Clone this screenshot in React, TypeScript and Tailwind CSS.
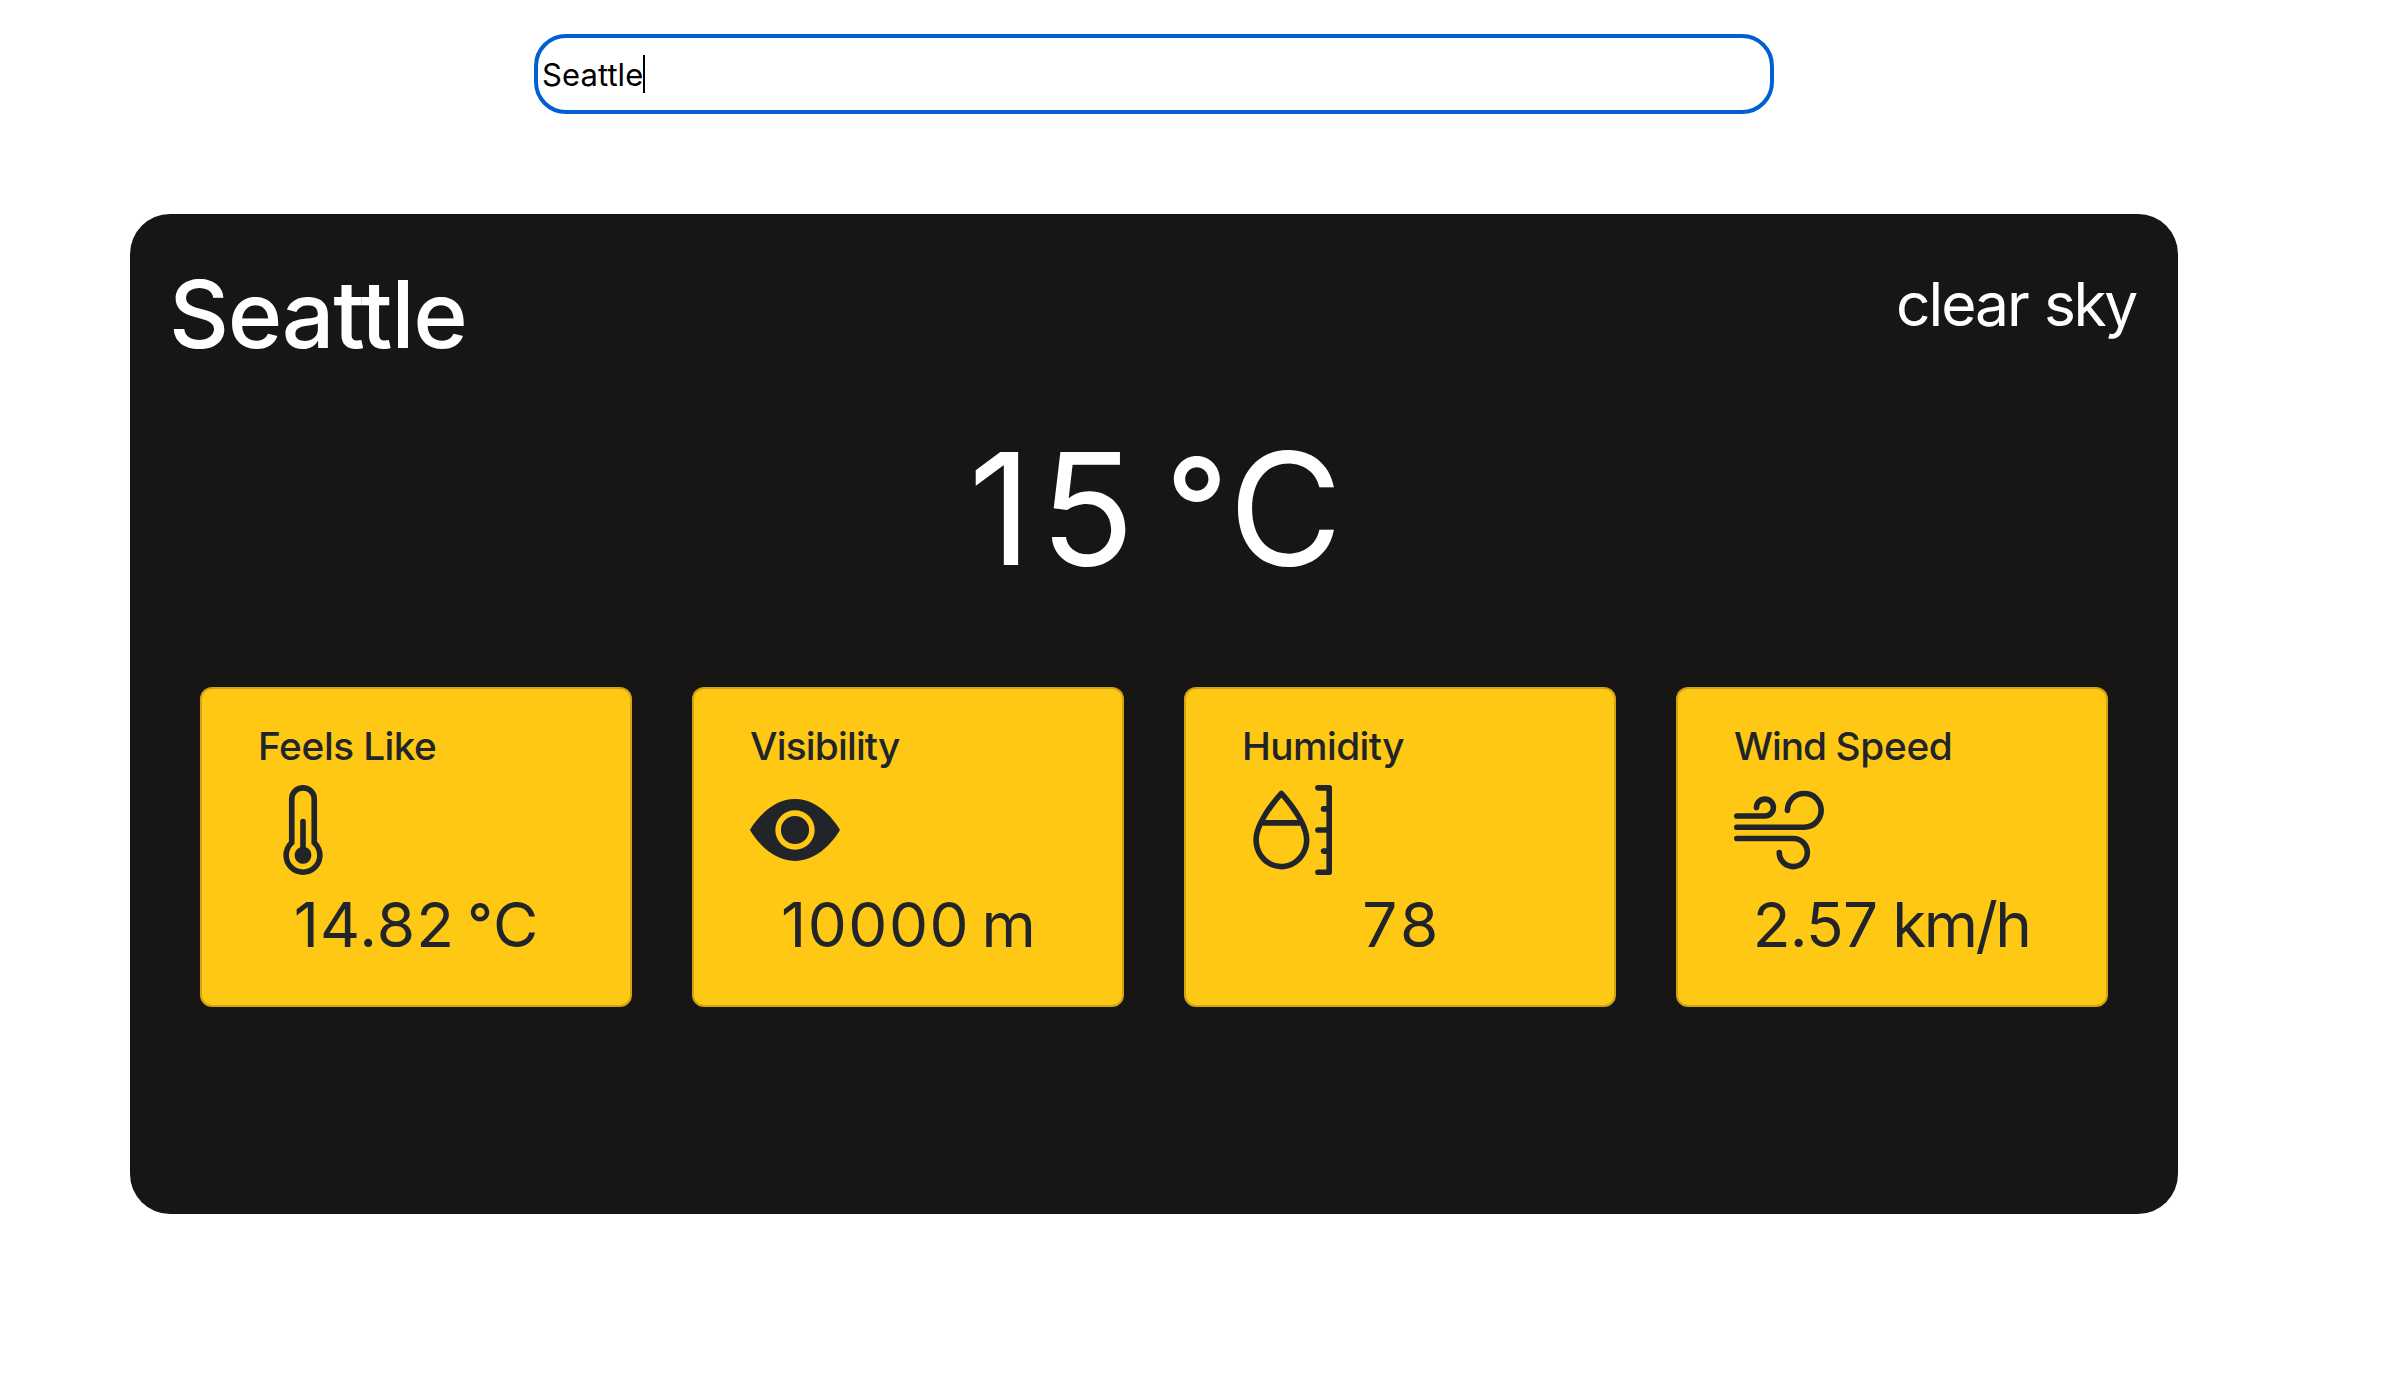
import type { ReactNode } from "react";
import { BsEyeFill, BsMoisture, BsThermometerHalf, BsWind } from "react-icons/bs";

function StatCard({ title, icon, children }: { title: ReactNode; icon: ReactNode; children: ReactNode }) {
  return (
    <article className="flex h-[320px] w-[432px] flex-col rounded-[12px] border-2 border-[#d0a312] bg-[#ffc814] pt-[33px] text-[#212529]">
      <h5 className="pl-14 text-[38.8px] leading-[48px] font-medium whitespace-nowrap">{title}</h5>
      <div className="mt-[15px] pl-14">{icon}</div>
      <p className="mt-[2px] text-center text-[62px] leading-[96px] whitespace-nowrap">{children}</p>
    </article>
  );
}

export default function App() {
  return (
    <main className="h-[1396px] w-[2386px] overflow-hidden bg-white font-[Inter,sans-serif]">
      <div className="pt-[34px] pl-[534px]">
        <div className="flex h-20 w-[1240px] items-center rounded-[32px] border-4 border-[#0060d1] pl-1 text-[31px] text-black">
          <span className="pt-[3px] tracking-[0.08px]">Seattle</span>
          <span className="h-[38px] w-[2px] bg-black" />
        </div>
      </div>

      <section className="mt-[100px] ml-[130px] h-[1000px] w-[2048px] rounded-[40px] bg-[#171614] pt-[42px] text-white">
        <header className="flex items-start justify-between pr-[42px] pl-[39px]">
          <h1 className="text-[93px] leading-[116px] font-medium tracking-[-1.41px]">Seattle</h1>
          <p className="text-[60.5px] leading-[96px] [word-spacing:-1px]">
            <span className="tracking-[-1.99px]">clear</span> <span className="tracking-[-2.34px]">sky</span>
          </p>
        </header>

        <p className="mt-[41px] pl-[3px] text-center text-[155.5px] leading-[192px] [word-spacing:-21.2px]">
          <span className="tracking-[8.27px]">15</span>{" "}
          <span className="align-[9px] text-[137px] leading-none font-medium tracking-[0.8px]">°</span>C
        </p>

        <div className="mt-[82px] flex gap-[60px] pl-[70px]">
          <StatCard
            title={
              <span className="[word-spacing:-1.1px]">
                <span className="tracking-[-0.37px]">Feels</span> <span className="tracking-[-0.57px]">Like</span>
              </span>
            }
            icon={<BsThermometerHalf size={90} />}
          >
            <span className="[word-spacing:-5.2px]">
              <span className="tracking-[1.15px]">14.82</span>{" "}
              <span className="align-[4px] text-[55px] leading-none font-medium tracking-[0.4px]">°</span>C
            </span>
          </StatCard>
          <StatCard title={<span className="tracking-[-0.8px]">Visibility</span>} icon={<BsEyeFill size={90} />}>
            <span className="pl-px [word-spacing:-6px]">
              <span className="tracking-[1.48px]">10000</span> m
            </span>
          </StatCard>
          <StatCard title={<span className="tracking-[-0.57px]">Humidity</span>} icon={<BsMoisture size={90} />}>
            <span className="pl-1 tracking-[3.52px]">78</span>
          </StatCard>
          <StatCard
            title={
              <span className="[word-spacing:-0.9px]">
                <span className="tracking-[-0.98px]">Wind</span> <span className="tracking-[-0.33px]">Speed</span>
              </span>
            }
            icon={<BsWind size={90} />}
          >
            <span className="pr-[2px] [word-spacing:-2.3px]">
              <span className="tracking-[-0.75px]">2.57</span> <span className="tracking-[-2.59px]">km/h</span>
            </span>
          </StatCard>
        </div>
      </section>
    </main>
  );
}
